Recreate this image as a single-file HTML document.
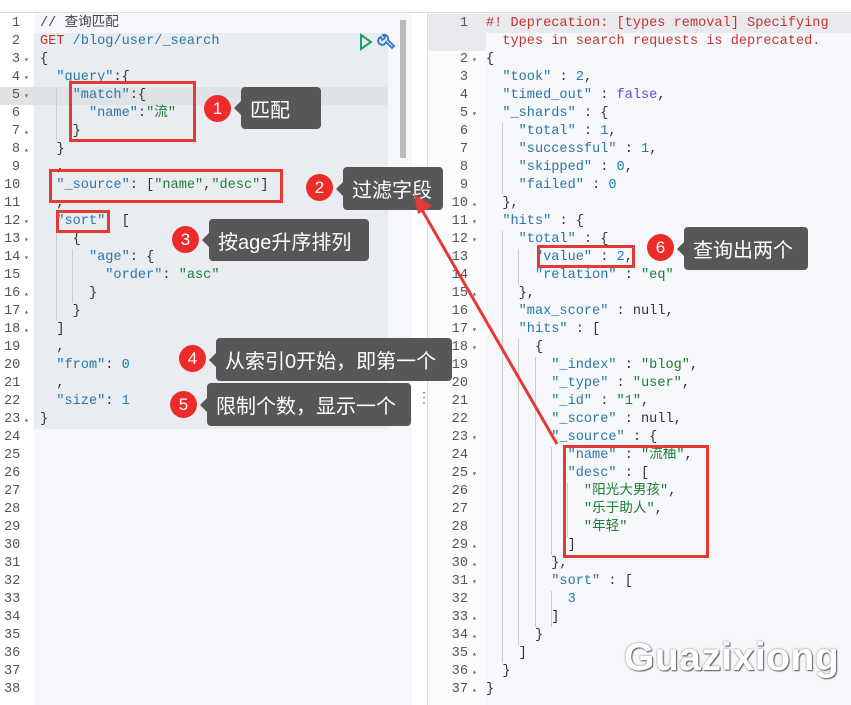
<!DOCTYPE html>
<html><head><meta charset="utf-8"><style>
body{margin:0;width:851px;height:705px;overflow:hidden;background:#fff;position:relative;font-family:"Liberation Mono","Noto Sans CJK SC",monospace;font-size:13.6px}
.ln{position:absolute;height:18px;line-height:18px;white-space:pre}
.g{color:#555;text-align:right;width:16px}
.gr{color:#555;text-align:right;width:40px}
.k{color:#2a76a5}.s{color:#1e7d34}.n{color:#1d7ea8}.p{color:#333}.f{color:#5b4fcf}.r{color:#c83232}.m{color:#444}
.box{position:absolute;border:3px solid #e53935;box-sizing:border-box}
.c{position:absolute;width:27px;height:27px;border-radius:50%;background:#ee2b2b;color:#fff;font:17px "Liberation Sans",sans-serif;text-align:center;line-height:27px}
.t{position:absolute;background:#575757;color:#fff;border-radius:4px;font:20px "Liberation Sans","Noto Sans CJK SC",sans-serif;padding-left:9px;box-sizing:border-box;display:flex;align-items:center}
.t:before{content:"";position:absolute;left:-7px;top:50%;margin-top:-7px;border:7px solid transparent;border-left:0;border-right-color:#575757}
.fa{position:absolute;color:#666;font-size:8px}
</style></head><body>
<div style="position:absolute;left:0;top:12px;width:851px;height:1px;background:#ddd"></div>
<div style="position:absolute;left:34px;top:13px;width:378px;height:692px;background:#f5f7fa"></div>
<div style="position:absolute;left:34px;top:33px;width:354px;height:396px;background:#e9ecf1"></div>
<div style="position:absolute;left:0;top:87px;width:388px;height:18px;background:#dfe3e8"></div>
<div style="position:absolute;left:400px;top:20px;width:6px;height:138px;background:#bbb"></div>
<div style="position:absolute;left:427px;top:13px;width:1px;height:692px;background:#ddd"></div>
<div style="position:absolute;left:428px;top:13px;width:423px;height:692px;background:#f5f7fa"></div>
<div style="position:absolute;left:428px;top:13px;width:58px;height:692px;background:#fafbfc"></div>
<div style="position:absolute;left:428px;top:14px;width:58px;height:37px;background:#e8eaee"></div>
<div style="position:absolute;left:486px;top:14px;width:365px;height:19px;background:#e8eaee"></div>
<div style="position:absolute;left:56px;top:87px;width:1px;height:54px;background:#ccc"></div>
<div style="position:absolute;left:56px;top:231px;width:1px;height:90px;background:#ccc"></div>
<div style="position:absolute;left:72px;top:249px;width:1px;height:54px;background:#ccc"></div>
<div style="position:absolute;left:502px;top:123px;width:1px;height:72px;background:#ccc"></div>
<div style="position:absolute;left:502px;top:231px;width:1px;height:432px;background:#ccc"></div>
<div style="position:absolute;left:518px;top:249px;width:1px;height:36px;background:#ccc"></div>
<div style="position:absolute;left:518px;top:339px;width:1px;height:306px;background:#ccc"></div>
<div style="position:absolute;left:535px;top:357px;width:1px;height:270px;background:#ccc"></div>
<div style="position:absolute;left:551px;top:447px;width:1px;height:108px;background:#ccc"></div>
<div style="position:absolute;left:551px;top:591px;width:1px;height:36px;background:#ccc"></div>
<div style="position:absolute;left:567px;top:483px;width:1px;height:54px;background:#ccc"></div>

<div id="L"></div><div id="R"></div>
<script>
var T0=15;
var L=[
'<span class="m">// 查询匹配</span>',
'<span class="r">GET</span> <span class="k">/blog/user/_search</span>',
'<span class="p">{</span>',
'  <span class="k">"query"</span><span class="p">:{</span>',
'    <span class="k">"match"</span><span class="p">:{</span>',
'      <span class="k">"name"</span><span class="p">:</span><span class="s">"流"</span>',
'    <span class="p">}</span>',
'  <span class="p">}</span>',
'  <span class="p">,</span>',
'  <span class="k">"_source"</span><span class="p">: [</span><span class="s">"name"</span><span class="p">,</span><span class="s">"desc"</span><span class="p">]</span>',
'  <span class="p">,</span>',
'  <span class="k">"sort"</span>  <span class="p">[</span>',
'    <span class="p">{</span>',
'      <span class="k">"age"</span><span class="p">: {</span>',
'        <span class="k">"order"</span><span class="p">: </span><span class="s">"asc"</span>',
'      <span class="p">}</span>',
'    <span class="p">}</span>',
'  <span class="p">]</span>',
'  <span class="p">,</span>',
'  <span class="k">"from"</span><span class="p">: </span><span class="n">0</span>',
'  <span class="p">,</span>',
'  <span class="k">"size"</span><span class="p">: </span><span class="n">1</span>',
'<span class="p">}</span>'];
var lf={3:'▾',4:'▾',5:'▾',7:'▴',8:'▴',12:'▾',13:'▾',14:'▾',16:'▴',17:'▴',18:'▴',23:'▴'};
var h='';
for(var i=1;i<=38;i++){var y=T0+18*(i-1);
h+='<div class="ln g" style="left:4px;top:'+y+'px">'+i+'</div>';
if(lf[i])h+='<div class="fa" style="left:24px;top:'+(y+4)+'px">'+lf[i]+'</div>';
if(L[i-1])h+='<div class="ln" style="left:40px;top:'+y+'px">'+L[i-1]+'</div>';}
document.getElementById('L').innerHTML=h;
function K(s){return '<span class="k">"'+s+'"</span>'}
function S(s){return '<span class="s">"'+s+'"</span>'}
function N(s){return '<span class="n">'+s+'</span>'}
function P(s){return '<span class="p">'+s+'</span>'}
var R=[
'<span class="r">#! Deprecation: [types removal] Specifying</span>',
P('{'),
'  '+K('took')+P(' : ')+N('2')+P(','),
'  '+K('timed_out')+P(' : ')+'<span class="f">false</span>'+P(','),
'  '+K('_shards')+P(' : {'),
'    '+K('total')+P(' : ')+N('1')+P(','),
'    '+K('successful')+P(' : ')+N('1')+P(','),
'    '+K('skipped')+P(' : ')+N('0')+P(','),
'    '+K('failed')+P(' : ')+N('0'),
'  '+P('},'),
'  '+K('hits')+P(' : {'),
'    '+K('total')+P(' : {'),
'      '+K('value')+P(' : ')+N('2')+P(','),
'      '+K('relation')+P(' : ')+S('eq'),
'    '+P('},'),
'    '+K('max_score')+P(' : null,'),
'    '+K('hits')+P(' : ['),
'      '+P('{'),
'        '+K('_index')+P(' : ')+S('blog')+P(','),
'        '+K('_type')+P(' : ')+S('user')+P(','),
'        '+K('_id')+P(' : ')+S('1')+P(','),
'        '+K('_score')+P(' : null,'),
'        '+K('_source')+P(' : {'),
'          '+K('name')+P(' : ')+S('流柚')+P(','),
'          '+K('desc')+P(' : ['),
'            '+S('阳光大男孩')+P(','),
'            '+S('乐于助人')+P(','),
'            '+S('年轻'),
'          '+P(']'),
'        '+P('},'),
'        '+K('sort')+P(' : ['),
'          '+N('3'),
'        '+P(']'),
'      '+P('}'),
'    '+P(']'),
'  '+P('}'),
P('}')];
var rf={2:'▾',5:'▾',10:'▴',11:'▾',12:'▾',15:'▴',17:'▾',18:'▾',23:'▾',25:'▾',29:'▴',30:'▴',31:'▾',33:'▴',34:'▴',35:'▴',36:'▴',37:'▴'};
h='';
for(var i=1;i<=37;i++){var y=T0+18*i;if(i==1)y=T0;
h+='<div class="ln gr" style="left:428px;top:'+y+'px">'+i+'</div>';
if(rf[i])h+='<div class="fa" style="left:472px;top:'+(y+4)+'px">'+rf[i]+'</div>';
if(R[i-1])h+='<div class="ln" style="left:486px;top:'+y+'px">'+R[i-1]+'</div>';}
h+='<div class="ln" style="left:486px;top:'+(T0+18)+'px"><span class="r">  types in search requests is deprecated.</span></div>';
document.getElementById('R').innerHTML=h;
</script>
<svg style="position:absolute;left:357px;top:32px" width="40" height="20" viewBox="0 0 40 20"><path d="M4 3 L14 10 L4 17 Z" fill="none" stroke="#1e9e6a" stroke-width="2"/><path d="M24 5 a4 4 0 1 0 5 5 l6 6 l2-2 l-6-6 a4 4 0 0 0-5-5 l2 2 l-1 2 l-2 1 z" fill="none" stroke="#2a76c8" stroke-width="1.8"/></svg>
<div style="position:absolute;left:417px;top:390px;color:#666;font-size:14px">⋮</div>
<div class="box" style="left:69px;top:81px;width:127px;height:61px"></div>
<div class="c" style="left:204px;top:95px">1</div>
<div class="t" style="left:241px;top:87px;width:80px;height:42px">匹配</div>
<div class="box" style="left:49px;top:169px;width:234px;height:34px"></div>
<div class="c" style="left:306px;top:174px">2</div>
<div class="t" style="left:343px;top:167px;width:100px;height:43px">过滤字段</div>
<div class="box" style="left:56px;top:210px;width:54px;height:23px"></div>
<div class="c" style="left:172px;top:226px">3</div>
<div class="t" style="left:209px;top:219px;width:160px;height:42px">按age升序排列</div>
<div class="c" style="left:179px;top:345px">4</div>
<div class="t" style="left:216px;top:338px;width:236px;height:43px">从索引0开始，即第一个</div>
<div class="c" style="left:170px;top:391px">5</div>
<div class="t" style="left:207px;top:383px;width:204px;height:43px">限制个数，显示一个</div>
<div class="box" style="left:537px;top:245px;width:98px;height:23px"></div>
<div class="c" style="left:647px;top:234px">6</div>
<div class="t" style="left:684px;top:227px;width:124px;height:43px">查询出两个</div>
<div class="box" style="left:563px;top:445px;width:146px;height:113px"></div>
<svg style="position:absolute;left:0;top:0" width="851" height="705"><line x1="557" y1="444" x2="422" y2="210" stroke="#e53935" stroke-width="3"/><path d="M414 194 L432 206 L418 214 Z" fill="#e53935"/></svg>
<div style="position:absolute;left:624px;top:636px;font:bold 39px 'Liberation Sans',sans-serif;color:#fff;text-shadow:0 0 2px #777,1px 1px 1px #555;letter-spacing:0.5px">Guazixiong</div>
</body></html>
